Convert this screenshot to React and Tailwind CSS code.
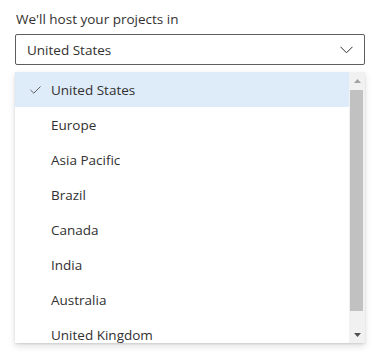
import React from "react";

const regions = [
  "United States",
  "Europe",
  "Asia Pacific",
  "Brazil",
  "Canada",
  "India",
  "Australia",
  "United Kingdom",
];

export default function App() {
  const selected = "United States";

  return (
    <div
      className="min-h-screen bg-white px-[15px] pt-[9px] text-[13.5px] text-[#323130]"
      style={{ fontFamily: '"Open Sans", "Noto Sans", sans-serif' }}
    >
      <div className="h-[20px] leading-[20px] pl-[1px]">We'll host your projects in</div>

      {/* Select box */}
      <div className="mt-[5px] flex h-[31px] w-[350px] items-center justify-between rounded-[2px] border border-[#605e5c] pl-[11px] pr-[11px]">
        <span className="pt-[1px]">United States</span>
        <svg width="13" height="8" viewBox="0 0 13 8" fill="none">
          <path d="M0.5 0.8 L6.5 6.8 L12.5 0.8" stroke="#323130" strokeWidth="1" />
        </svg>
      </div>

      {/* Dropdown list */}
      <div className="mt-[7px] flex h-[271px] w-[350px] bg-white shadow-[0_3.2px_7.2px_rgba(0,0,0,0.13),0_0.6px_1.8px_rgba(0,0,0,0.11)]">
        <div className="flex-1 overflow-hidden">
          {regions.map((r) => (
            <div
              key={r}
              className={
                "flex h-[35px] items-center pl-[15px] pt-[1px] " +
                (r === selected ? "bg-[#deecf9]" : "bg-white")
              }
            >
              <span className="flex w-[21px] items-center">
                {r === selected && (
                  <svg width="11" height="8" viewBox="0 0 11 8" fill="none">
                    <path d="M0.5 4 L3.8 7.2 L10.5 0.5" stroke="#605e5c" strokeWidth="1" />
                  </svg>
                )}
              </span>
              <span>{r}</span>
            </div>
          ))}
        </div>

        {/* Scrollbar */}
        <div className="flex w-[16px] flex-col bg-[#f1f1f1]">
          <div className="flex h-[17px] items-center justify-center">
            <svg width="7" height="4" viewBox="0 0 7 4">
              <path d="M0 4 L3.5 0 L7 4 Z" fill="#a3a3a3" />
            </svg>
          </div>
          <div className="ml-[1px] mr-[2px] mt-[1px] h-[221px] bg-[#c1c1c1]" />
          <div className="flex-1" />
          <div className="flex h-[17px] items-center justify-center">
            <svg width="7" height="4" viewBox="0 0 7 4">
              <path d="M0 0 L7 0 L3.5 4 Z" fill="#505050" />
            </svg>
          </div>
        </div>
      </div>
    </div>
  );
}
